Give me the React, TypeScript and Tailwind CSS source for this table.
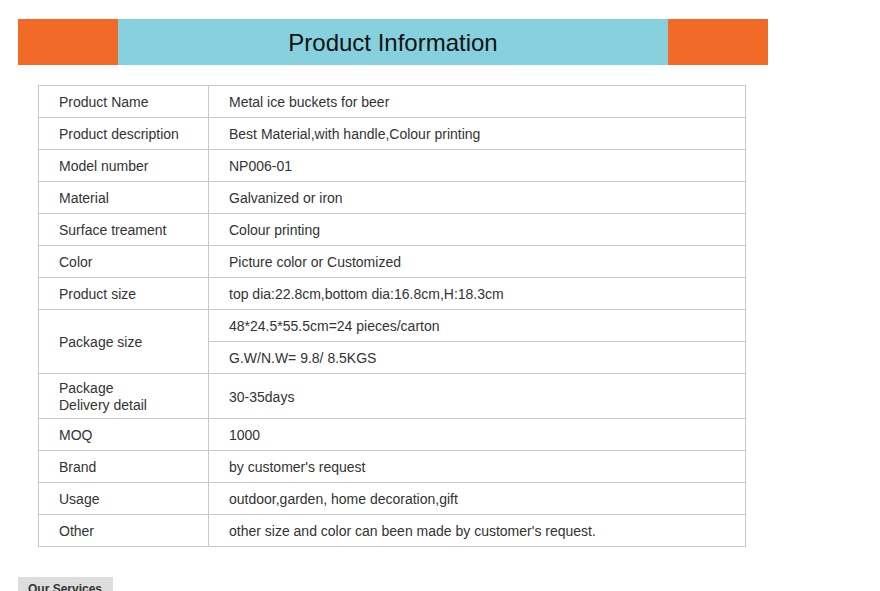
export default function App() {
  const rows: { label: string[]; values: string[] }[] = [
    { label: ["Product Name"], values: ["Metal ice buckets for beer"] },
    { label: ["Product description"], values: ["Best Material,with handle,Colour printing"] },
    { label: ["Model number"], values: ["NP006-01"] },
    { label: ["Material"], values: ["Galvanized or iron"] },
    { label: ["Surface treament"], values: ["Colour printing"] },
    { label: ["Color"], values: ["Picture color or Customized"] },
    { label: ["Product size"], values: ["top dia:22.8cm,bottom dia:16.8cm,H:18.3cm"] },
    { label: ["Package size"], values: ["48*24.5*55.5cm=24 pieces/carton", "G.W/N.W= 9.8/ 8.5KGS"] },
    { label: ["Package", "Delivery detail"], values: ["30-35days"] },
    { label: ["MOQ"], values: ["1000"] },
    { label: ["Brand"], values: ["by customer's request"] },
    { label: ["Usage"], values: ["outdoor,garden, home decoration,gift"] },
    { label: ["Other"], values: ["other size and color can been made by customer's request."] },
  ];

  return (
    <div className="min-h-[591px] bg-white pt-[19px] font-['Liberation_Sans',sans-serif] text-[#333]">
      <div className="ml-[18px] flex h-[46px] w-[750px]">
        <div className="w-[100px] bg-[#f26a27]" />
        <div className="flex flex-1 items-center justify-center bg-[#86d1dd] pt-[2px] text-[24px] text-[#111]">
          Product Information
        </div>
        <div className="w-[100px] bg-[#f26a27]" />
      </div>

      <table className="ml-[38px] mt-[20px] w-[708px] border-collapse text-[14px]">
        <tbody>
          {rows.map((r) =>
            r.values.map((v, i) => (
              <tr key={r.label.join() + i} className={r.label.length > 1 ? "h-[45px]" : "h-[32px]"}>
                {i === 0 && (
                  <td
                    rowSpan={r.values.length}
                    className="w-[170px] border border-[#c8c8c8] pl-[20px] pt-[2px] leading-[17px]"
                  >
                    {r.label.map((l) => (
                      <div key={l}>{l}</div>
                    ))}
                  </td>
                )}
                <td className="border border-[#c8c8c8] pl-[20px] pt-[2px]">{v}</td>
              </tr>
            ))
          )}
        </tbody>
      </table>

      <div className="ml-[18px] mt-[30px] inline-block h-[20px] w-[95px] bg-[#dddddd] px-[10px] pt-[6px] text-[12px] font-bold leading-none text-[#333]">
        Our Services
      </div>
    </div>
  );
}
